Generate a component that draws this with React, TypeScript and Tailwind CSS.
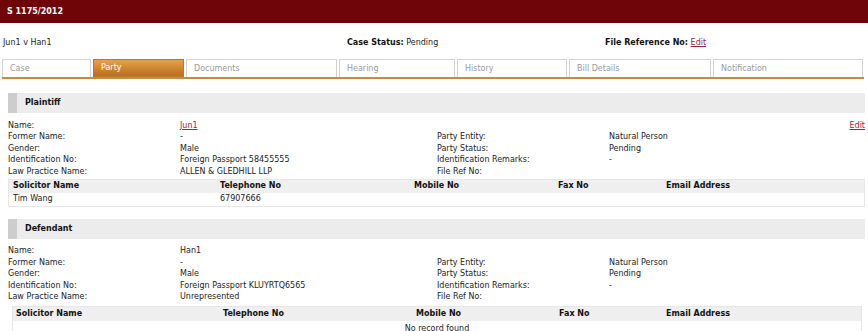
const tabs = [
  { label: "Case", w: "w-[89px]" },
  { label: "Party", w: "w-[91px]", active: true },
  { label: "Documents", w: "w-[151px]" },
  { label: "Hearing", w: "w-[116px]" },
  { label: "History", w: "w-[110px]" },
  { label: "Bill Details", w: "w-[142px]" },
  { label: "Notification", w: "w-[150px]" },
];

type Party = {
  title: string;
  name: string;
  nameLink?: boolean;
  idNo: string;
  lawPractice: string;
  solicitors: string[][];
  editLink?: boolean;
};

const parties: Party[] = [
  {
    title: "Plaintiff",
    name: "Jun1",
    nameLink: true,
    idNo: "Foreign Passport 58455555",
    lawPractice: "ALLEN & GLEDHILL LLP",
    solicitors: [["Tim Wang", "67907666", "", "", ""]],
    editLink: true,
  },
  {
    title: "Defendant",
    name: "Han1",
    idNo: "Foreign Passport KLUYRTQ6565",
    lawPractice: "Unrepresented",
    solicitors: [],
  },
];

function SectionHeader({ title }: { title: string }) {
  return (
    <div className="flex h-[20px] bg-[#ececec] ml-[8px] mr-[3px]">
      <div className="w-[9px] bg-[#cdcdcd]" />
      <div className="pl-[8px] flex items-center font-bold text-[#111]">{title}</div>
    </div>
  );
}

function PartyBlock({ p, first }: { p: Party; first: boolean }) {
  const left = [
    ["Name:", p.name],
    ["Former Name:", "-"],
    ["Gender:", "Male"],
    ["Identification No:", p.idNo],
    ["Law Practice Name:", p.lawPractice],
  ];
  const right = [
    ["", ""],
    ["Party Entity:", "Natural Person"],
    ["Party Status:", "Pending"],
    ["Identification Remarks:", "-"],
    ["File Ref No:", ""],
  ];
  return (
    <div>
      <SectionHeader title={p.title} />
      <div className="mt-[7px] ml-[8px] mr-[3px]">
        {left.map((row, i) => (
          <div key={i} className="flex h-[11.5px] items-center">
            <div className="w-[172px]">{row[0]}</div>
            <div className="w-[257px]">
              {i === 0 && p.nameLink ? (
                <span className="text-[#a3203c] underline">{row[1]}</span>
              ) : (
                row[1]
              )}
            </div>
            <div className="w-[172px]">{right[i][0]}</div>
            <div className="flex-1">{right[i][1]}</div>
            {i === 0 && p.editLink && (
              <span className="text-[#a3203c] underline">Edit</span>
            )}
          </div>
        ))}
      </div>
      {first ? (
        <div className="ml-[8px] mr-[3px] mt-[1px] border border-[#e6e6e6]">
          <div className="flex h-[13px] items-center bg-[#efefef] font-bold text-[#111] pl-[4px]">
            <div className="w-[207px]">Solicitor Name</div>
            <div className="w-[194px]">Telephone No</div>
            <div className="w-[144px]">Mobile No</div>
            <div className="w-[108px]">Fax No</div>
            <div className="flex-1">Email Address</div>
          </div>
          {p.solicitors.map((s, i) => (
            <div key={i} className="flex h-[13px] items-center pl-[4px]">
              <div className="w-[207px]">{s[0]}</div>
              <div className="w-[194px]">{s[1]}</div>
              <div className="w-[144px]">{s[2]}</div>
              <div className="w-[108px]">{s[3]}</div>
              <div className="flex-1">{s[4]}</div>
            </div>
          ))}
        </div>
      ) : (
        <div className="ml-[12px] mr-[6px] mt-[3px] border border-[#e6e6e6] border-b-0">
          <div className="flex h-[14px] items-center bg-[#efefef] font-bold text-[#111] pl-[3px]">
            <div className="w-[207px]">Solicitor Name</div>
            <div className="w-[193px]">Telephone No</div>
            <div className="w-[143px]">Mobile No</div>
            <div className="w-[107px]">Fax No</div>
            <div className="flex-1">Email Address</div>
          </div>
          <div className="h-[15px] flex items-center justify-center">No record found</div>
        </div>
      )}
    </div>
  );
}

export default function App() {
  return (
    <div
      className="w-[868px] h-[331px] overflow-hidden bg-white text-[8px] text-[#222]"
      style={{ fontFamily: '"DejaVu Sans", Verdana, sans-serif' }}
    >
      <div className="h-[23px] bg-[#700509] flex items-center pl-[7px] text-white font-bold">
        S 1175/2012
      </div>

      <div className="flex h-[12px] mt-[14px] items-center">
        <div className="w-[347px] pl-[3px]">Jun1 v Han1</div>
        <div className="w-[258px]">
          <span className="font-bold text-[#111]">Case Status:</span> Pending
        </div>
        <div>
          <span className="font-bold text-[#111]">File Reference No:</span>{" "}
          <span className="text-[#a3203c] underline">Edit</span>
        </div>
      </div>

      <div className="mt-[10px] ml-[2px] w-[862px] border-b-2 border-[#c98a3e] flex gap-[2px]">
        {tabs.map((t) => (
          <div
            key={t.label}
            className={
              t.active
                ? `${t.w} h-[18px] flex items-center pl-[7px] text-white border border-[#b87a30] bg-gradient-to-b from-[#e7a04a] to-[#b96f1d]`
                : `${t.w} h-[18px] flex items-center pl-[7px] text-[#999] border border-[#d2d2d2] border-b-0 bg-white`
            }
          >
            {t.label}
          </div>
        ))}
      </div>

      <div className="mt-[14px]">
        <PartyBlock p={parties[0]} first />
      </div>
      <div className="mt-[12px]">
        <PartyBlock p={parties[1]} first={false} />
      </div>
    </div>
  );
}
